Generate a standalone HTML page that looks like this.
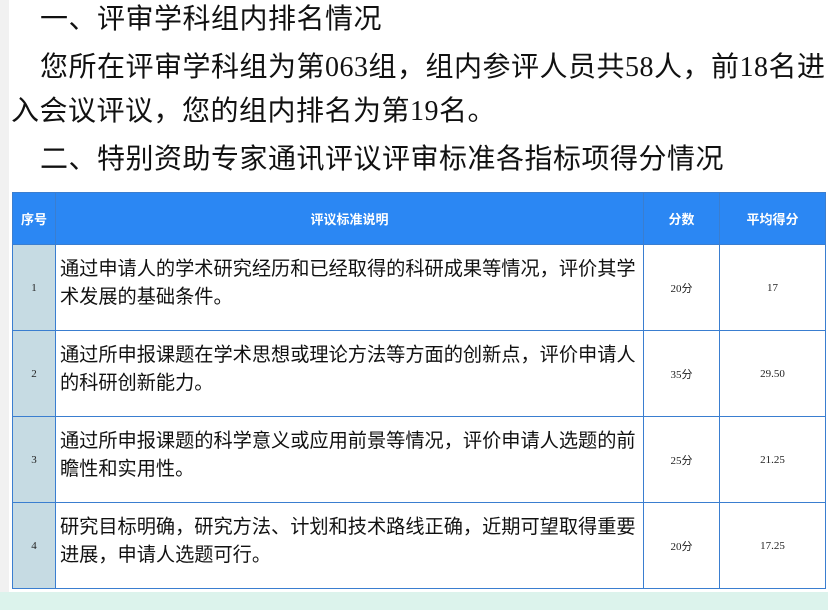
<!DOCTYPE html>
<html><head><meta charset="utf-8"><style>
body{margin:0;width:828px;height:610px;background:#fff;position:relative;overflow:hidden;font-family:"Liberation Serif","Noto Sans CJK SC",serif;}
.strip{position:absolute;left:0;top:0;width:9px;height:592px;background:#f1f1f1;}
.bot{position:absolute;left:0;top:592px;width:828px;height:18px;background:#dcf3ec;}
.t{position:absolute;font-size:28px;line-height:46px;color:#111;white-space:nowrap;letter-spacing:0.5px;font-family:"Liberation Serif","Noto Sans CJK SC",sans-serif;}
table{position:absolute;left:12px;top:192px;border-collapse:collapse;width:814px;table-layout:fixed;}
td,th{border:1.5px solid #3a7ed0;padding:0;}
th{background:#2b87f3;color:#fff;font-weight:bold;font-size:13px;height:51px;font-family:"Noto Sans CJK SC",sans-serif;}
td{height:85px;text-align:center;font-size:11px;color:#222;}
td.n{background:#c6dbe3;}
td.d{text-align:left;font-size:19.2px;line-height:28px;padding:0 6px 0 4px;color:#111;font-family:"Liberation Sans","Noto Sans CJK SC",sans-serif;}
td.d div{margin-top:-8px;}
</style></head><body>
<div class="strip"></div>
<div class="t" style="left:40px;top:-3px">一、评审学科组内排名情况</div>
<div class="t" style="left:40px;top:45px">您所在评审学科组为第063组，组内参评人员共58人，前18名进</div>
<div class="t" style="left:11px;top:89px">入会议评议，您的组内排名为第19名。</div>
<div class="t" style="left:40px;top:137px">二、特别资助专家通讯评议评审标准各指标项得分情况</div>
<table>
<colgroup><col style="width:43px"><col><col style="width:76px"><col style="width:106px"></colgroup>
<tr><th>序号</th><th>评议标准说明</th><th>分数</th><th>平均得分</th></tr>
<tr><td class="n">1</td><td class="d"><div>通过申请人的学术研究经历和已经取得的科研成果等情况，评价其学术发展的基础条件。</div></td><td>20分</td><td>17</td></tr>
<tr><td class="n">2</td><td class="d"><div>通过所申报课题在学术思想或理论方法等方面的创新点，评价申请人的科研创新能力。</div></td><td>35分</td><td>29.50</td></tr>
<tr><td class="n">3</td><td class="d"><div>通过所申报课题的科学意义或应用前景等情况，评价申请人选题的前瞻性和实用性。</div></td><td>25分</td><td>21.25</td></tr>
<tr><td class="n">4</td><td class="d"><div>研究目标明确，研究方法、计划和技术路线正确，近期可望取得重要进展，申请人选题可行。</div></td><td>20分</td><td>17.25</td></tr>
</table>
<div class="bot"></div>
</body></html>
